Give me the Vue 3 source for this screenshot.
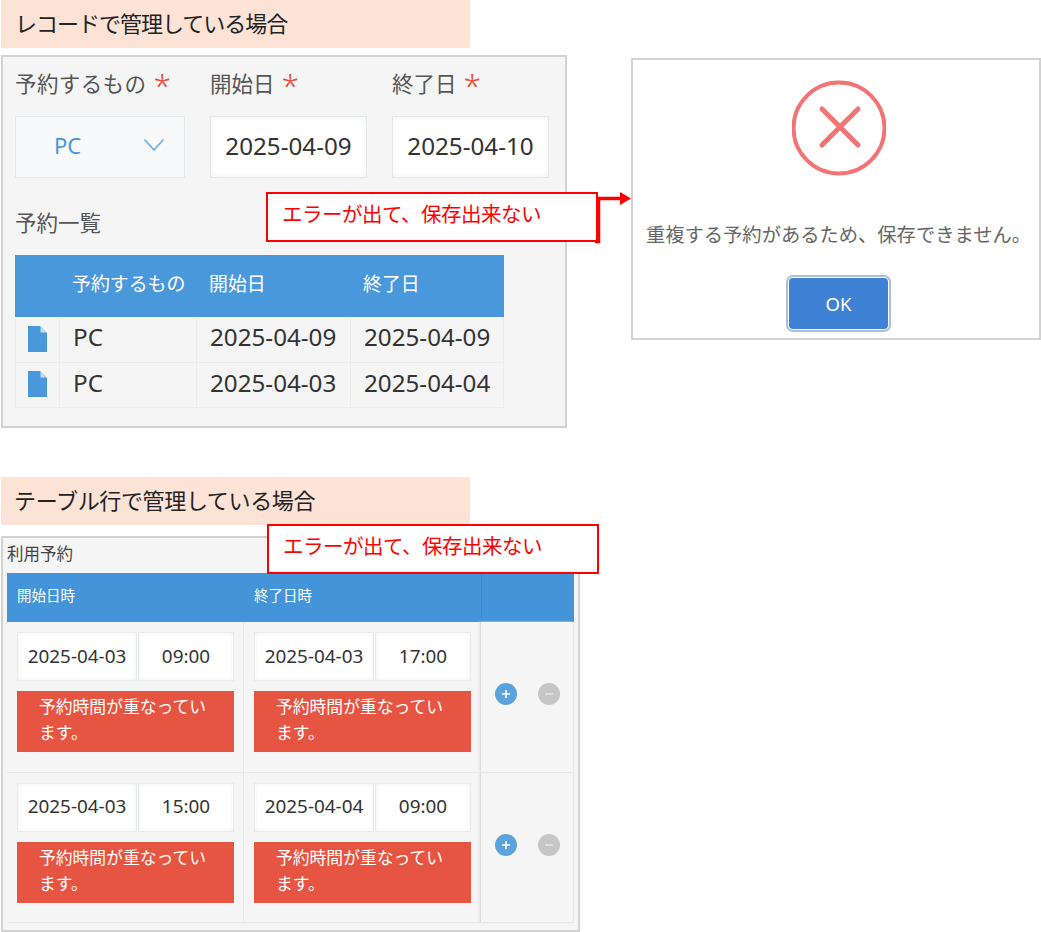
<script setup>
const rows1 = [
  { item: 'PC', start: '2025-04-09', end: '2025-04-09' },
  { item: 'PC', start: '2025-04-03', end: '2025-04-04' }
]
const rows2 = [
  { sd: '2025-04-03', st: '09:00', ed: '2025-04-03', et: '17:00' },
  { sd: '2025-04-03', st: '15:00', ed: '2025-04-04', et: '09:00' }
]
const errorText = '予約時間が重なっています。'
</script>

<template>
  <div class="page">
    <div class="left">
      <div class="banner"><span class="banner-a">レコードで管理している場合</span></div>
      <section class="panel-a">
        <div class="fields">
          <div class="field f-item">
            <div class="label">予約するもの<span class="req">*</span></div>
            <div class="select"><span>PC</span>
              <svg width="22" height="14" viewBox="0 0 22 14"><path d="M1.5 1.5 11 12 20.5 1.5" fill="none" stroke="#6fb1e6" stroke-width="1.8"/></svg>
            </div>
          </div>
          <div class="field f-date">
            <div class="label">開始日<span class="req">*</span></div>
            <div class="input">2025-04-09</div>
          </div>
          <div class="field f-date">
            <div class="label">終了日<span class="req">*</span></div>
            <div class="input">2025-04-10</div>
          </div>
        </div>
        <div class="list-title">予約一覧</div>
        <table class="t1">
          <thead>
            <tr><th class="c0"></th><th class="c1">予約するもの</th><th class="c2">開始日</th><th class="c3">終了日</th></tr>
          </thead>
          <tbody>
            <tr v-for="(r, i) in rows1" :key="i">
              <td class="icon-cell">
                <svg width="19" height="26" viewBox="0 0 19 26"><path d="M0 0H12L19 7V26H0Z" fill="#4a98dc"/><path d="M12.5 0.5 18.5 6.5H12.5Z" fill="#c4dcf3"/></svg>
              </td>
              <td>{{ r.item }}</td><td>{{ r.start }}</td><td>{{ r.end }}</td>
            </tr>
          </tbody>
        </table>
      </section>

      <div class="banner second"><span class="banner-b">テーブル行で管理している場合</span></div>
      <section class="panel-b">
        <div class="sub-title">利用予約</div>
        <div class="t2">
          <div class="t2-head">
            <div class="h-cell">開始日時</div>
            <div class="h-cell">終了日時</div>
            <div class="h-act"></div>
          </div>
          <div class="t2-row" v-for="(r, i) in rows2" :key="i">
            <div class="t2-cell">
              <div class="dt"><div class="d">{{ r.sd }}</div><div class="t">{{ r.st }}</div></div>
              <div class="err">{{ errorText }}</div>
            </div>
            <div class="t2-cell">
              <div class="dt"><div class="d">{{ r.ed }}</div><div class="t">{{ r.et }}</div></div>
              <div class="err">{{ errorText }}</div>
            </div>
            <div class="t2-act">
              <span class="round plus">
                <svg width="10" height="10" viewBox="0 0 10 10"><path d="M5 1V9M1 5H9" stroke="#fff" stroke-width="1.6"/></svg>
              </span>
              <span class="round minus">
                <svg width="10" height="10" viewBox="0 0 10 10"><path d="M1 5H9" stroke="#e4e4e4" stroke-width="1.8"/></svg>
              </span>
            </div>
          </div>
        </div>
      </section>
    </div>

    <div class="right">
      <div class="dialog">
        <svg class="err-icon" width="94" height="96" viewBox="0 0 94 96">
          <circle cx="47" cy="48" r="45.5" fill="none" stroke="#f27474" stroke-width="4"/>
          <path d="M30 29 66 65M66 29 30 65" stroke="#f27474" stroke-width="5" stroke-linecap="round"/>
        </svg>
        <p class="msg">重複する予約があるため、保存できません。</p>
        <button class="ok" type="button">OK</button>
      </div>
    </div>

    <div class="callout c-a">エラーが出て、保存出来ない</div>
    <svg class="arrow" width="40" height="56" viewBox="0 0 40 56">
      <path d="M0 50.5H3.5V7.5H26" fill="none" stroke="#f00" stroke-width="3.5"/>
      <path d="M25 1 36 7.5 25 14Z" fill="#f00"/>
    </svg>
    <div class="callout c-b">エラーが出て、保存出来ない</div>
  </div>
</template>

<style>
html, body { margin: 0; background: #fff; }
</style>

<style scoped>
.page {
  position: relative;
  width: 1041px;
  height: 932px;
  display: flex;
  overflow: hidden;
  font-family: "Noto Sans", "Noto Sans CJK JP", sans-serif;
  color: #333;
}
.left { width: 600px; flex: none; padding-left: 1px; box-sizing: border-box; }
.banner {
  width: 469px;
  height: 48px;
  background: #fde3d6;
  display: flex;
  align-items: center;
  padding: 0 0 4px 14px;
  box-sizing: border-box;
  font-size: 22px;
  color: #222;
}
.banner-a { letter-spacing: -1px; }
.banner-b { letter-spacing: -0.35px; margin-left: -1px; }
.banner.second { margin-top: 49px; }

.panel-a {
  margin-top: 7px;
  width: 566px;
  height: 373px;
  box-sizing: border-box;
  border: 2px solid #d2d2d2;
  background: #f5f5f5;
  padding: 10px 0 0 12px;
}
.fields { display: flex; gap: 25px; }
.f-item { width: 170px; }
.f-date { width: 157px; }
.label {
  height: 34px;
  line-height: 34px;
  font-size: 21.5px;
  color: #555;
  white-space: nowrap;
}
.f-item .label { letter-spacing: 0.4px; }
.req { color: #e74c3c; font-size: 32px; font-weight: 300; margin-left: 7px; line-height: 30px; vertical-align: -5px; letter-spacing: 0; }
.select, .input {
  margin-top: 15px;
  height: 62px;
  box-sizing: border-box;
  border: 1px solid #e3e7e8;
  display: flex;
  align-items: center;
  padding-bottom: 4px;
}
.select {
  background: #f7f9fa;
  color: #4a98dc;
  font-size: 22px;
  padding: 0 19px 4px 38px;
  justify-content: space-between;
}
.input {
  background: #fff;
  box-shadow: inset 0 0 6px #eef0f0;
  font-size: 24.2px;
  justify-content: center;
  color: #333;
}
.list-title { margin-top: 28px; font-size: 21.5px; color: #555; line-height: 34px; }
.t1 {
  margin-top: 15px;
  border-collapse: collapse;
  table-layout: fixed;
  width: 488px;
}
.c0 { width: 44px; }
.c1 { width: 137px; }
.c2 { width: 154px; }
.c3 { width: 153px; }
.t1 th {
  height: 61px;
  padding: 0 0 7px 12px;
  background: #4a98dc;
  border: 1px solid #4a98dc;
  color: #fff;
  font-size: 18.9px;
  font-weight: 400;
  text-align: left;
  white-space: nowrap;
  box-sizing: border-box;
}
.t1 td {
  height: 45.5px;
  padding: 0 0 4px 13px;
  border: 1px solid #e8ecec;
  font-size: 24.2px;
  color: #333;
  white-space: nowrap;
  box-sizing: border-box;
  line-height: 1;
}
.t1 td.icon-cell { padding: 0 0 1px; text-align: center; }
.icon-cell svg { display: block; margin: 0 auto; }

.panel-b {
  margin-top: 11px;
  width: 579px;
  height: 396px;
  box-sizing: border-box;
  border: 2px solid #d2d2d2;
  background: #f5f5f5;
  padding: 0 3px 0 4px;
}
.sub-title { height: 35px; line-height: 31px; font-size: 16.5px; color: #444; }
.t2 { width: 567px; }
.t2-head {
  display: grid;
  grid-template-columns: 237px 237px 93px;
  height: 49px;
  background: #4394d8;
}
.h-cell {
  color: #fff;
  font-size: 14.5px;
  line-height: 45px;
  padding-left: 10px;
}
.h-act { border-left: 1px solid #3f86c4; }
.t2-row {
  display: grid;
  grid-template-columns: 237px 237px 93px;
  height: 150.5px;
  border-bottom: 1px solid #e8e8e8;
  box-sizing: border-box;
}
.t2-cell {
  padding: 10px 9px 0 10px;
  border-right: 1px solid #e8e8e8;
}
.dt { display: flex; gap: 1px; height: 49px; }
.d, .t {
  background: #fff;
  border: 1px solid #e8ecec;
  box-sizing: border-box;
  box-shadow: inset 0 0 4px #f0f0f0;
  display: flex;
  align-items: center;
  justify-content: center;
  font-size: 18.9px;
  color: #333;
  padding-bottom: 2px;
}
.d { width: 120px; }
.t { width: 96px; }
.err {
  margin-top: 10px;
  width: 217px;
  height: 61px;
  box-sizing: border-box;
  background: #e65541;
  color: #fff;
  font-size: 16.8px;
  line-height: 26px;
  padding: 3px 20px 0 22px;
}
.t2-act {
  display: flex;
  gap: 21px;
  padding: 61px 0 0 14px;
  border-left: 1px solid #dcdcdc;
  border-right: 1px solid #e8e8e8;
  margin-left: -1px;
  box-shadow: -1px 0 2px #e4e4e4;
}
.round {
  width: 22px;
  height: 22px;
  border-radius: 50%;
  display: flex;
  align-items: center;
  justify-content: center;
}
.plus { background: #5ba3dc; }
.minus { background: #c6c6c6; }

.right { padding: 58px 0 0 31px; }
.dialog {
  width: 410px;
  height: 282px;
  box-sizing: border-box;
  border: 2px solid #d2d2d2;
  background: #fff;
  display: flex;
  flex-direction: column;
  align-items: center;
  padding: 20px 0 0 5px;
}
.err-icon { display: block; }
.msg {
  margin: 42px 0 0;
  font-size: 19.3px;
  line-height: 34px;
  color: #666;
  white-space: nowrap;
}
.ok {
  margin-top: 26px;
  width: 99px;
  height: 51px;
  padding: 0;
  border: none;
  border-radius: 4px;
  background: #3f81d4;
  color: #fff;
  font-family: inherit;
  font-size: 18.5px;
  box-shadow: 0 0 0 1px #fff, 0 0 0 3px #a9bfdc;
}

.callout {
  position: absolute;
  box-sizing: border-box;
  width: 332px;
  height: 50px;
  background: #fff;
  border: 2px solid #f00;
  color: #f00;
  font-size: 20.5px;
  line-height: 40px;
  padding-left: 14px;
  letter-spacing: -0.5px;
  white-space: nowrap;
}
.c-a { left: 266px; top: 192px; }
.c-b { left: 267px; top: 524px; }
.arrow { position: absolute; left: 595px; top: 191px; }
</style>
